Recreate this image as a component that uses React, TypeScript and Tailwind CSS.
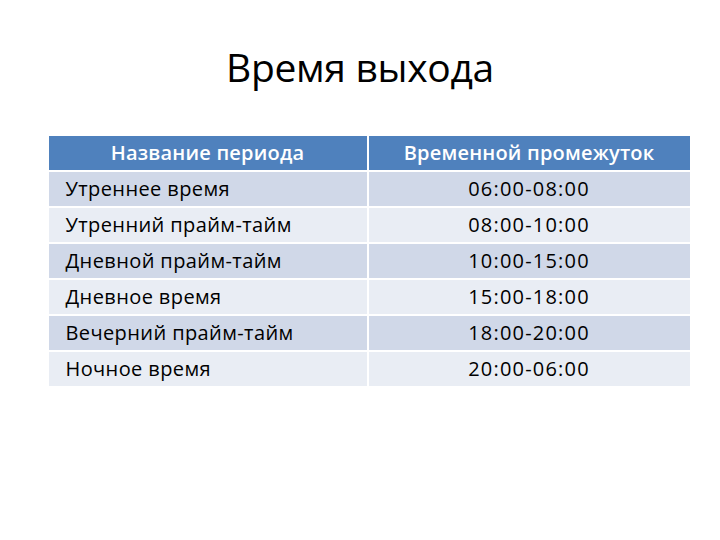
import React from "react";

const rows: [string, string][] = [
  ["Утреннее время", "06:00-08:00"],
  ["Утренний прайм-тайм", "08:00-10:00"],
  ["Дневной прайм-тайм", "10:00-15:00"],
  ["Дневное время", "15:00-18:00"],
  ["Вечерний прайм-тайм", "18:00-20:00"],
  ["Ночное время", "20:00-06:00"],
];

export default function App() {
  return (
    <div
      className="w-[720px] h-[540px] bg-white flex flex-col items-center"
      style={{ fontFamily: '"Open Sans", "Noto Sans", sans-serif' }}
    >
      <h1 className="mt-[42px] h-[50px] text-[39px] leading-[50px] text-black tracking-[-0.3px]">
        Время выхода
      </h1>
      <div className="mt-[44px] w-[641px] ml-[18px] flex flex-col gap-[2px] text-[20px] tracking-[0.4px] text-black">
        <div className="flex h-[34px] gap-[2px] bg-white">
          <div className="w-[318px] bg-[#4f81bd] text-white font-semibold flex items-center justify-center leading-none tracking-[0.2px]">
            Название периода
          </div>
          <div className="flex-1 bg-[#4f81bd] text-white font-semibold flex items-center justify-center leading-none tracking-[0.2px]">
            Временной промежуток
          </div>
        </div>
        {rows.map(([a, b], i) => (
          <div key={i} className="flex h-[34px] gap-[2px]">
            <div
              className={`w-[318px] flex items-center pl-[17px] leading-none ${
                i % 2 === 0 ? "bg-[#d0d8e8]" : "bg-[#e9edf4]"
              }`}
            >
              {a}
            </div>
            <div
              className={`flex-1 flex items-center justify-center leading-none tracking-[1.2px] ${
                i % 2 === 0 ? "bg-[#d0d8e8]" : "bg-[#e9edf4]"
              }`}
            >
              {b}
            </div>
          </div>
        ))}
      </div>
    </div>
  );
}
